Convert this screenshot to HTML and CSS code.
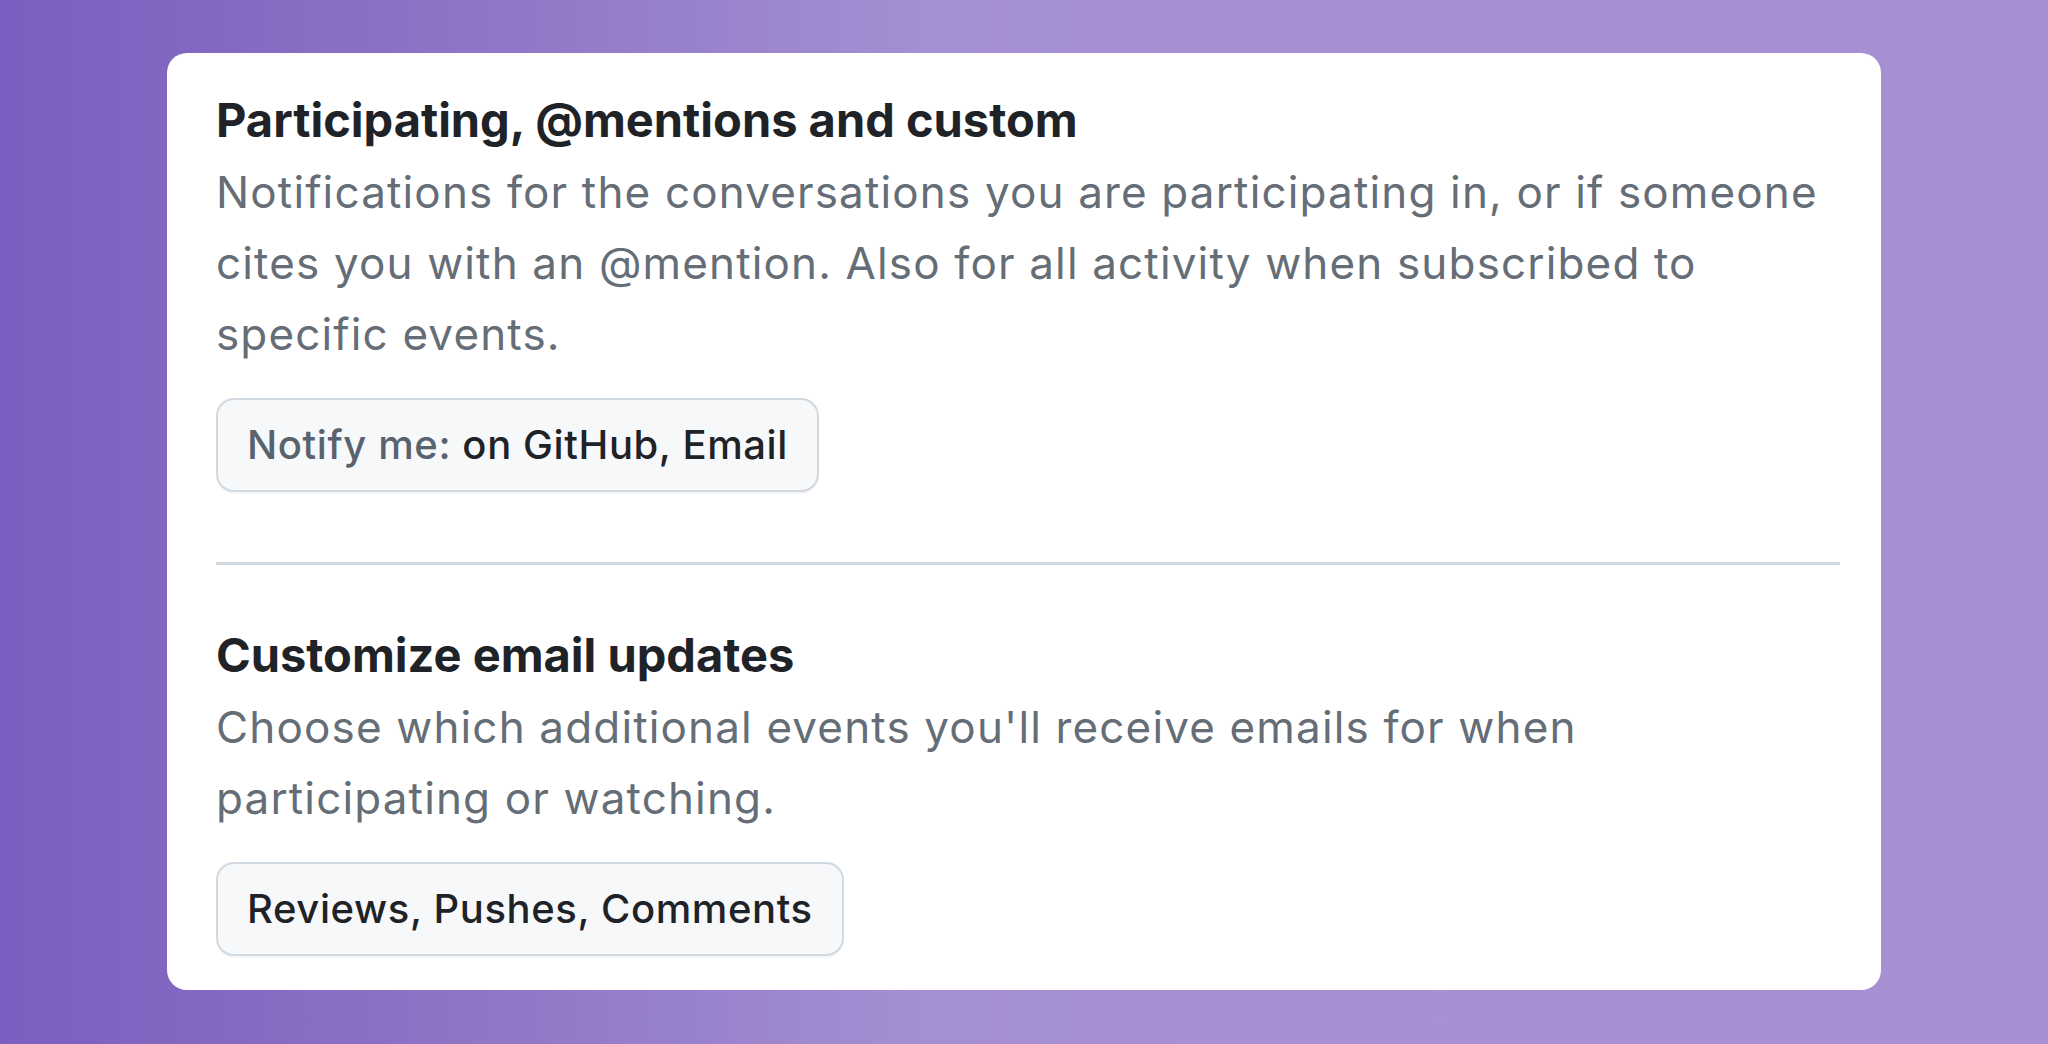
FILE: index.html
```html
<!DOCTYPE html>
<html lang="en">
<head>
<meta charset="utf-8">
<title>Notification settings</title>
<link rel="stylesheet" href="styles.css">
</head>
<body>
  <main class="card">
    <section class="section first">
      <h3 class="title">Participating, @mentions and custom</h3>
      <p class="desc">Notifications for the conversations you are participating in, or if someone cites you with an @mention. Also for all activity when subscribed to specific events.</p>
      <button class="btn"><span class="muted">Notify me:</span> on GitHub, Email</button>
    </section>
    <hr class="divider">
    <section class="section second">
      <h3 class="title">Customize email updates</h3>
      <p class="desc">Choose which additional events you'll receive emails for when participating or watching.</p>
      <button class="btn">Reviews, Pushes, Comments</button>
    </section>
  </main>
</body>
</html>
```

FILE: styles.css
```css
html, body {
  margin: 0;
  padding: 0;
}
body {
  width: 2048px;
  height: 1044px;
  overflow: hidden;
  background: linear-gradient(90deg, #7b5ebf 0%, #8d74c6 22%, #a48fd2 45%, #a791d3 70%, #a68fd2 100%);
  font-family: Inter, "Noto Sans", sans-serif;
  padding-top: 53px;
  box-sizing: border-box;
}
.card {
  margin-left: 167px;
  width: 1714px;
  height: 937px;
  box-sizing: border-box;
  background: #ffffff;
  border-radius: 20px;
  padding: 31px 41px 0 49px;
}
.title {
  margin: 0;
  font-size: 47px;
  line-height: 71px;
  font-weight: 700;
  color: #1f2328;
}
.desc {
  margin: 2px 0 0;
  font-size: 44px;
  letter-spacing: 1.15px;
  line-height: 71px;
  font-weight: 400;
  color: #656d76;
}
.btn {
  margin-top: 28px;
  display: inline-block;
  font-family: inherit;
  font-size: 40px;
  letter-spacing: 0.6px;
  line-height: 60px;
  font-weight: 500;
  color: #1f2328;
  background: #f6f8fa;
  border: 2px solid #d1d9e0;
  border-radius: 18px;
  padding: 15px 29px;
  box-shadow: 0 2px 0 rgba(31, 35, 40, 0.04);
}
.muted {
  color: #59636e;
}
.divider {
  margin: 70px 0 0;
  border: 0;
  height: 3px;
  background: #d1d9e0;
}
.second {
  padding-top: 54px;
}
```
